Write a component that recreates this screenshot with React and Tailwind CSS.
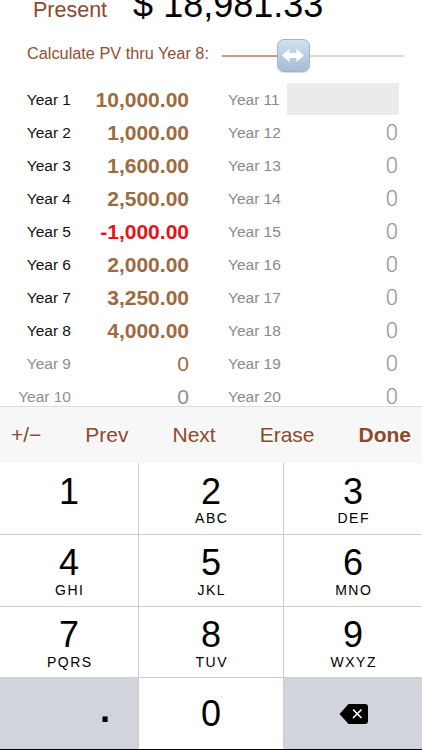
const leftRows = [
  { label: "Year 1", value: "10,000.00" },
  { label: "Year 2", value: "1,000.00" },
  { label: "Year 3", value: "1,600.00" },
  { label: "Year 4", value: "2,500.00" },
  { label: "Year 5", value: "-1,000.00", negative: true },
  { label: "Year 6", value: "2,000.00" },
  { label: "Year 7", value: "3,250.00" },
  { label: "Year 8", value: "4,000.00" },
  { label: "Year 9", value: "0", off: true, zero: "brown" },
  { label: "Year 10", value: "0", off: true, zero: "gray" },
];

const rightRows = Array.from({ length: 10 }, (_, i) => `Year ${i + 11}`);

const keys = [
  ["1", ""],
  ["2", "ABC"],
  ["3", "DEF"],
  ["4", "GHI"],
  ["5", "JKL"],
  ["6", "MNO"],
  ["7", "PQRS"],
  ["8", "TUV"],
  ["9", "WXYZ"],
];

const valueClass = (row) => {
  if (row.negative) return "text-[#e4141b] font-bold";
  if (row.zero === "brown") return "text-[#9c6b3f]";
  if (row.zero === "gray") return "text-[#8e8e8e]";
  return "text-[#9c6b3f] font-bold";
};

const Thumb = () => (
  <div className="absolute left-[55px] top-0 w-[33px] h-[33px] rounded-[7px] border border-[#9fb4c9] bg-gradient-to-b from-[#d3e1ee] to-[#a3bcd5] flex items-center justify-center shadow-[0_1px_1px_rgba(0,0,0,0.15)]">
    <svg width="22" height="13" viewBox="0 0 22 13">
      <path d="M0 6.5 L7.5 0 V4 H14.5 V0 L22 6.5 L14.5 13 V9 H7.5 V13 Z" fill="#ffffff" />
    </svg>
  </div>
);

const Backspace = () => (
  <svg width="29" height="20" viewBox="0 0 29 20">
    <path d="M9.5 0 H26 a3 3 0 0 1 3 3 V17 a3 3 0 0 1 -3 3 H9.5 L0.5 10 Z" fill="#000000" />
    <path d="M14.5 6 L22 13.5 M22 6 L14.5 13.5" stroke="#ffffff" strokeWidth="1.7" strokeLinecap="round" />
  </svg>
);

export default function App() {
  return (
    <div className="w-[422px] h-[750px] overflow-hidden bg-white font-['Liberation_Sans',Arial,sans-serif]">
      {/* header, partly scrolled off the top */}
      <div className="h-[24px] overflow-hidden">
        <div className="flex items-baseline mt-[-13px] pl-[33px] gap-[26px]">
          <span className="text-[21.5px] leading-none text-[#8a4b2d]">Present</span>
          <span className="text-[36px] leading-none text-black">$ 18,981.33</span>
        </div>
      </div>

      {/* slider */}
      <div className="h-[59px] flex items-center pl-[27px] pr-[18px] gap-[13px]">
        <span className="text-[16.3px] leading-none text-[#8f4f35] whitespace-nowrap">Calculate PV thru Year 8:</span>
        <div className="relative flex-1 h-[33px] mt-[4px] flex items-center">
          <div className="w-[58px] h-[2px] bg-[#cf9b85]" />
          <div className="flex-1 h-[2px] bg-[#dadada]" />
          <Thumb />
        </div>
      </div>

      {/* cash flow table */}
      <div className="h-[323px] overflow-hidden flex">
        <div className="w-[211px] flex flex-col">
          {leftRows.map((row) => (
            <div key={row.label} className="h-[33px] flex items-center shrink-0">
              <span className={`w-[71px] text-right text-[15.5px] ${row.off ? "text-[#8e8e8e]" : "text-[#111111]"}`}>
                {row.label}
              </span>
              <span className={`w-[118px] text-right text-[21px] ${valueClass(row)}`}>{row.value}</span>
            </div>
          ))}
        </div>
        <div className="flex flex-col pl-[17px]">
          {rightRows.map((label, i) => (
            <div key={label} className="h-[33px] flex items-center shrink-0">
              <span className="w-[59px] text-[15.5px] text-[#8a8a8a]">{label}</span>
              {i === 0 ? (
                <div className="w-[112px] h-[32px] self-start bg-[#ebebeb]" />
              ) : (
                <span className="w-[112px] text-right pr-[1px] text-[22px] font-light text-[#8e8e8e] font-['Roboto',sans-serif]">
                  0
                </span>
              )}
            </div>
          ))}
        </div>
      </div>

      {/* keyboard toolbar */}
      <div className="h-px bg-[#dcdcdc]" />
      <div className="h-[56px] bg-[#f7f7f7] flex items-center justify-between px-[11px] text-[21px] text-[#8b4a2b]">
        <span>+/−</span>
        <span>Prev</span>
        <span>Next</span>
        <span>Erase</span>
        <span className="font-bold">Done</span>
      </div>

      {/* number pad */}
      <div className="grid grid-cols-[138px_144px_138px] grid-rows-4 gap-px bg-[#cdcdcd] h-[286px]">
        {keys.map(([digit, letters]) => (
          <div key={digit} className="bg-white flex flex-col items-center pt-[10.5px] text-black">
            <span className="text-[36px] leading-none">{digit}</span>
            <span className="text-[14px] leading-none tracking-[1.5px] pl-[1.5px] mt-[1.5px]">
              {letters || "\u00a0"}
            </span>
          </div>
        ))}
        <div className="bg-[#d1d5db] flex items-center justify-end pr-[28px] pb-[7px]">
          <span className="text-[36px] leading-none font-bold">.</span>
        </div>
        <div className="bg-white flex items-center justify-center">
          <span className="text-[36px] leading-none">0</span>
        </div>
        <div className="bg-[#d1d5db] flex items-center justify-center">
          <Backspace />
        </div>
      </div>
      <div className="h-px bg-black" />
    </div>
  );
}
